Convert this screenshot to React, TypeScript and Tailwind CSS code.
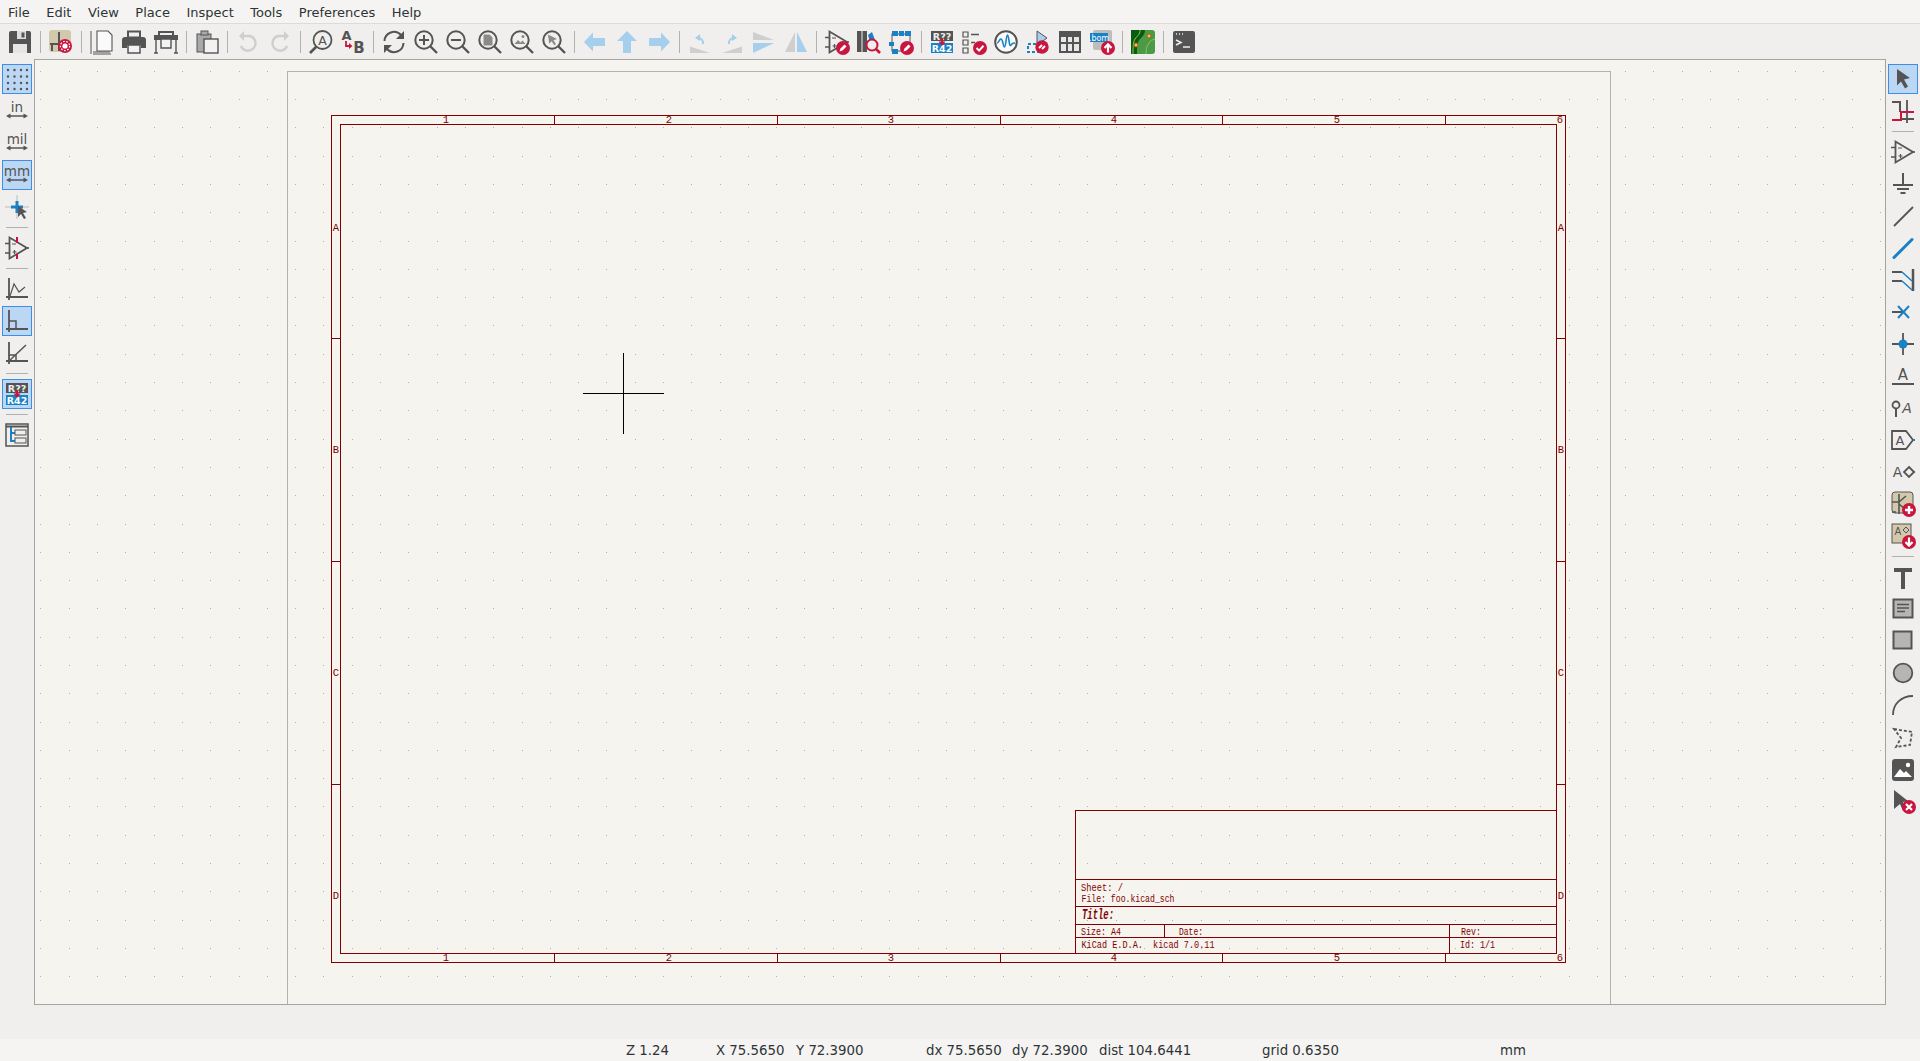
import { ReactNode } from 'react';

const G = '#545454';
const B = '#1a81c4';
const R = '#c8163f';
const LB = '#a5cfec';
const DIS = '#cfcfcf';
const TAN = '#d2c8ab';
const WIRE = '#840000';
const FONT = '"DejaVu Sans", sans-serif';
const MONO = '"Liberation Mono", monospace';

const Glyph = ({ children }: { children: ReactNode }) => (
  <svg viewBox="0 0 24 24" className="w-6 h-6 shrink-0 overflow-visible">{children}</svg>
);

const Label = ({ x, y, size, children, fill = G, weight = 400, anchor = 'middle', style = 'normal' }: { x: number; y: number; size: number; children: ReactNode; fill?: string; weight?: number; anchor?: string; style?: string }) => (
  <text x={x} y={y} fontSize={size} fill={fill} fontWeight={weight} fontStyle={style} textAnchor={anchor} fontFamily={FONT}>{children}</text>
);

const Badge = ({ children }: { children?: ReactNode }) => (
  <g>
    <circle cx="18" cy="18" r="7" fill={R} />
    {children}
  </g>
);

const PencilBadge = () => (
  <Badge><path d="M14.5 21.5l1-3 4-4 2 2-4 4z" fill="#fff" /></Badge>
);
const CheckBadge = () => (
  <Badge><path d="M14.5 18l2.6 2.6 4.4-4.8" fill="none" stroke="#fff" strokeWidth="2" /></Badge>
);
const PlusBadge = () => (
  <Badge><path d="M18 14v8M14 18h8" stroke="#fff" strokeWidth="2.4" /></Badge>
);
const DownBadge = () => (
  <Badge><path d="M18 13.5v8M14.5 18l3.5 3.7 3.5-3.7" fill="none" stroke="#fff" strokeWidth="2.2" /></Badge>
);
const UpBadge = () => (
  <Badge><path d="M18 22.5v-8M14.5 18l3.5-3.7 3.5 3.7" fill="none" stroke="#fff" strokeWidth="2.2" /></Badge>
);

const Mag = ({ children }: { children?: ReactNode }) => (
  <>
    <circle cx="10" cy="10" r="8.7" fill="none" stroke={G} strokeWidth="2" />
    <path d="M16 16l7 7" stroke={G} strokeWidth="2.4" />
    {children}
  </>
);

const OpAmp = ({ color = G }: { color?: string }) => (
  <>
    <path d="M4.5 1.5v21L22 12z" fill="none" stroke={color} strokeWidth="1.8" />
    <path d="M0 7.5h4.5M0 17h4.5M22 12h2" stroke={color} strokeWidth="1.6" />
    <path d="M7 8h4M7.5 16h4M9.5 14v4" stroke={color} strokeWidth="1.2" />
  </>
);

const Annotate = () => (
  <>
    <rect x="1" y="1" width="22" height="10" fill={G} />
    <rect x="1" y="13" width="22" height="10" fill={B} />
    <Label x={12} y={9.5} size={9.5} fill="#eee" weight={700}>R??</Label>
    <Label x={12} y={21.5} size={9.5} fill="#fff" weight={700}>R42</Label>
    <path d="M12 8v5" stroke={R} strokeWidth="2" />
    <path d="M8.5 11.5h7L12 16z" fill={R} />
  </>
);

const Transistor = () => (
  <path d="M8 2v8M1 10h7M8 10v12M8 10l7-6M8 12l7 6M1 20h4" fill="none" stroke={G} strokeWidth="1.6" />
);

const Unit = ({ text }: { text: string }) => (
  <>
    <Label x={12} y={13} size={13.5}>{text}</Label>
    <path d="M3 17h18" stroke={G} strokeWidth="1.5" />
    <path d="M1 17l4.5-2.5v5zM23 17l-4.5-2.5v5z" fill={G} />
  </>
);

const ChartAxes = ({ children }: { children: ReactNode }) => (
  <>
    <path d="M4 1v22M1 20h22" stroke={G} strokeWidth="1.8" fill="none" />
    {children}
  </>
);

const dots4 = [3, 9.5, 16, 22];

const topBar: (ReactNode | 'sep')[] = [
  <><path d="M1 3a2 2 0 012-2h18a2 2 0 012 2v20H1z" fill={G} /><rect x="9" y="1" width="9" height="8" fill="#ddd" /><rect x="13.5" y="2.5" width="3" height="5" fill={G} /><rect x="5" y="14" width="14" height="9" fill="#e6e6e6" /></>,
  'sep',
  <><rect x="0" y="0" width="22" height="22" rx="3" fill={TAN} /><path d="M10 2v7M1 14h8M10 9v12M3 14v7" fill="none" stroke={G} strokeWidth="2" /><circle cx="16" cy="16" r="7" fill={R} /><circle cx="16" cy="16" r="2.6" fill="#fff" /><circle cx="16" cy="16" r="4.6" fill="none" stroke="#fff" strokeWidth="1.2" strokeDasharray="1.6 1.6" /></>,
  'sep',
  <><path d="M3 22h17M3 24h18" fill="none" stroke={G} strokeWidth="1" /><path d="M7 1h11l4 4v16H7z" fill="#fafafa" stroke={G} strokeWidth="1.1" /><path d="M1 1v23" stroke={G} strokeWidth="1" /></>,
  <><path d="M6 1.5h12v6H6z" fill="none" stroke={G} strokeWidth="2" /><path d="M3 7h18a3 3 0 013 3v8h-5v-3H5v3H0v-8a3 3 0 013-3z" fill={G} /><path d="M6 15h12v8H6z" fill="#f2f2f2" stroke={G} strokeWidth="1.5" /></>,
  <><path d="M5 2h14v5H5z" fill="none" stroke={G} strokeWidth="2" /><rect x="0" y="5" width="24" height="5" fill={G} /><path d="M2 10v13M22 10v13M0 23h4M20 23h4" stroke={G} strokeWidth="1.4" /><path d="M7 9h10v9H7z" fill="#f2f2f2" stroke={G} strokeWidth="1.4" /></>,
  'sep',
  <><rect x="2" y="4" width="14" height="18" fill="#a9a9a9" stroke={G} strokeWidth="1" /><rect x="6" y="1" width="7" height="4" fill="#a9a9a9" stroke={G} strokeWidth="1" /><rect x="9" y="9" width="14" height="14" fill="#f2f2f2" stroke={G} strokeWidth="1.4" /></>,
  'sep',
  <><path d="M7 6h7a7.5 7.5 0 11-9 10" fill="none" stroke={DIS} strokeWidth="2.4" /><path d="M8 1v10L3 6z" fill={DIS} /></>,
  <><path d="M17 6h-7a7.5 7.5 0 109 10" fill="none" stroke={DIS} strokeWidth="2.4" /><path d="M16 1v10l5-5z" fill={DIS} /></>,
  'sep',
  <><circle cx="13.5" cy="10" r="9" fill="none" stroke={G} strokeWidth="1.8" /><path d="M7.5 16.5L1 23" stroke={G} strokeWidth="2.6" /><Label x={13.5} y={14.5} size={12.5}>A</Label></>,
  <><Label x={5.5} y={10} size={13} weight={700}>A</Label><Label x={18} y={22.5} size={15} weight={700}>B</Label><path d="M5 11v5h4" fill="none" stroke={R} strokeWidth="1.8" /><path d="M8 13l3.5 3L8 19z" fill={R} /></>,
  'sep',
  <><path d="M2.5 11A9.5 9.5 0 0119 5M21.5 13A9.5 9.5 0 015 19" fill="none" stroke={G} strokeWidth="2" /><path d="M22 1v8h-8zM2 23v-8h8z" fill={G} /></>,
  <Mag><path d="M10 5v10M5 10h10" stroke={G} strokeWidth="2" /></Mag>,
  <Mag><path d="M5 10h10" stroke={G} strokeWidth="2" /></Mag>,
  <Mag><path d="M6 5h5.5L14 7.5V15H6z" fill="#8a8a8a" stroke="#8a8a8a" /></Mag>,
  <Mag><path d="M4.5 14l3.5-4 2.5 2.5 2-2 3 3.5z" fill="#8a8a8a" /><circle cx="13" cy="6.5" r="1.5" fill="#8a8a8a" /></Mag>,
  <Mag><path d="M6 4.5l9 4.5-3.5 1.3 2.5 4-1.8 1-2.5-4-2.5 2.5z" fill="#8a8a8a" /></Mag>,
  'sep',
  <path d="M1 12l9-9.500V8h12v8H10v5.500z" fill={LB} />,
  <path d="M12 1l10 10h-6v12H8V11H2z" fill={LB} />,
  <path d="M23 12l-9-9.500V8H2v8h12v5.500z" fill={LB} />,
  'sep',
  <><path d="M2 23V16.5L22 23z" fill={DIS} /><path d="M15 14a5 5 0 00-5-6" fill="none" stroke={LB} strokeWidth="2" /><path d="M7 8l5-4v7z" fill={LB} /></>,
  <><path d="M22 23v-6.5L2 23z" fill={DIS} /><path d="M9 14a5 5 0 015-6" fill="none" stroke={LB} strokeWidth="2" /><path d="M17 8l-5-4v7z" fill={LB} /></>,
  <><path d="M1 2l21 8H1z" fill={DIS} /><path d="M1 13h21L1 23z" fill={LB} /></>,
  <><path d="M11 2v20H1z" fill={DIS} /><path d="M13 2l10 20H13z" fill={LB} /></>,
  'sep',
  <><OpAmp /><PencilBadge /></>,
  <><rect x="0" y="1" width="4.5" height="21" fill={G} /><rect x="5.5" y="1" width="4.5" height="21" fill={G} /><path d="M11 5l4-3 3 8-5 2z" fill={B} /><circle cx="15" cy="15" r="5.5" fill="#eee" stroke={R} strokeWidth="2" /><path d="M19 19l4 4" stroke={R} strokeWidth="2.6" /></>,
  <><rect x="3" y="4" width="18" height="17" fill="none" stroke={G} strokeWidth="1" /><path d="M3 6h6v-5H3zM10 6h5v-5h-5zM16 6h6v-5h-6zM0 12h5v4H0zM3 24h6v-5H3z" fill={B} /><PencilBadge /></>,
  'sep',
  <Annotate />,
  <><path d="M1 2h5v5H1zM1 10h5v5H1zM1 18h5v5H1z" fill="none" stroke={G} strokeWidth="1.2" /><path d="M9 4.5h8M9 12.5h4" stroke={G} strokeWidth="1.4" /><CheckBadge /></>,
  <><circle cx="12" cy="12" r="10.8" fill="#fafafa" stroke={G} strokeWidth="2" /><path d="M3 13c2 0 2-4 4-4s2 8 3.5 8S12 5 13.5 5 15 18 17 15c1-2 2-2 4-2" fill="none" stroke={B} strokeWidth="1.6" /></>,
  <><path d="M11 1v14l10-7z" fill={LB} stroke={G} strokeWidth="1" /><path d="M2 14h12v8H2z" fill="none" stroke={B} strokeWidth="2" strokeDasharray="3 2" /><circle cx="16" cy="17" r="6.7" fill={R} /><path d="M13 18l3-3M19 16l-3 3" stroke="#fff" strokeWidth="1.8" /></>,
  <><rect x="1" y="1" width="22" height="22" fill={G} /><path d="M3 7h5v5H3zM10 7h4v5h-4zM16 7h5v5h-5zM3 14h5v7H3zM10 14h4v7h-4zM16 14h5v7h-5z" fill="#e6e6e6" /></>,
  <><rect x="3" y="0" width="19" height="20" rx="2" fill="#bdbdbd" /><rect x="0" y="3" width="18" height="9" fill={B} /><Label x={9} y={10.5} size={8} fill="#fff">.bom</Label><UpBadge /></>,
  'sep',
  <><rect x="0" y="0" width="24" height="24" rx="3" fill="#4c9a45" /><path d="M0 0h14c0 4-2 6-5 9s-3 9-3 15H0z" fill="#0a5d0e" /><path d="M9 0c0 5-3 6-5 9s-2 9-2 15M15 24c0-6 1-8 3-11s3-3 6-4" fill="none" stroke="#8cc45e" strokeWidth="1" /><circle cx="18" cy="6" r="2" fill="#f5c24a" stroke="#a85f1a" /><circle cx="5" cy="15" r="2" fill="#f5c24a" stroke="#a85f1a" /></>,
  'sep',
  <><rect x="1" y="1" width="22" height="22" rx="2" fill={G} /><path d="M4 4h1M7 4h1M10 4h1" stroke="#eee" strokeWidth="1.5" /><path d="M4 10l5 2.5L4 15" fill="none" stroke="#eee" strokeWidth="1.5" /><path d="M11 17h7" stroke="#eee" strokeWidth="1.5" /></>,
];

type BarItem = ReactNode | 'sep' | { icon: ReactNode; on: true };

const leftBar: BarItem[] = [
  { on: true, icon: <path d={dots4.map((y) => dots4.map((x) => `M${x - 1.2} ${y}a1.2 1.2 0 102.4 0a1.2 1.2 0 10-2.4 0z`).join('')).join('')} fill={G} /> },
  <Unit text="in" />,
  <Unit text="mil" />,
  { on: true, icon: <Unit text="mm" /> },
  <><path d="M12 0v24M0 12h24" stroke="#bbb" strokeWidth="1" /><path d="M12 6v12M6 12h12" stroke={B} strokeWidth="3" /><path d="M13 11l9 6-4 1 3 5-2 1-3-5-3 3z" fill={G} /></>,
  'sep',
  <><OpAmp /><path d="M12 1v6M12 18v5" stroke={R} strokeWidth="2" /></>,
  'sep',
  <ChartAxes><path d="M5 19L9 7l5 8 6-5" fill="none" stroke={G} strokeWidth="1.2" /></ChartAxes>,
  { on: true, icon: <ChartAxes><path d="M4 12h7v8" fill="none" stroke={G} strokeWidth="1.5" /></ChartAxes> },
  <ChartAxes><path d="M4 20L21 4M4 14h7v6" fill="none" stroke={G} strokeWidth="1.5" /></ChartAxes>,
  'sep',
  { on: true, icon: <Annotate /> },
  'sep',
  <><rect x="1" y="1" width="22" height="22" fill="none" stroke={G} strokeWidth="1.5" /><path d="M1 3.5h22" stroke={G} strokeWidth="2" /><path d="M6 4v15M6 10h4M6 18h4" stroke={B} strokeWidth="2" fill="none" /><rect x="10" y="7" width="11" height="5" fill="none" stroke={G} strokeWidth="1" /><rect x="10" y="15" width="11" height="5" fill="none" stroke={G} strokeWidth="1" /></>,
];

const rightBar: BarItem[] = [
  { on: true, icon: <path d="M6 2l13 9-6 1.5 4 7-3 2-4-7-4 4z" fill={G} /> },
  <><path d="M16 1v23M11 13h12M11 20h12" stroke={G} strokeWidth="1.8" fill="none" /><path d="M1 3h8v10" fill="none" stroke={G} strokeWidth="2" /><path d="M1 21h9v-8h13" fill="none" stroke={R} strokeWidth="2" /></>,
  'sep',
  <OpAmp />,
  <path d="M12 1v12M2 13h20M6 17h12M9.5 21h5" stroke={G} strokeWidth="2" fill="none" />,
  <path d="M3 22L22 3" stroke={G} strokeWidth="1.8" />,
  <path d="M3 21.5L21 3.5" stroke={B} strokeWidth="3" strokeLinecap="round" />,
  <><path d="M22 1v22" stroke={G} strokeWidth="2.5" /><path d="M1 4h10M1 13h10" stroke={G} strokeWidth="2" /><path d="M11 4l10 9M11 13l10 9" stroke={B} strokeWidth="1.5" /></>,
  <><path d="M1 12h10" stroke={G} strokeWidth="2" /><path d="M7 6l11 12M18 6L7 18" stroke={B} strokeWidth="2" /></>,
  <><path d="M1 12h22M12 1v22" stroke={G} strokeWidth="1.8" /><circle cx="12" cy="12" r="4.5" fill={B} /></>,
  <><Label x={12} y={16} size={15}>A</Label><path d="M1 20h22" stroke={G} strokeWidth="2" /></>,
  <><circle cx="5" cy="9" r="3.5" fill="none" stroke={G} strokeWidth="1.8" /><path d="M5 13v8" stroke={G} strokeWidth="2" /><Label x={16} y={17} size={14} style="italic">A</Label></>,
  <><path d="M1 3h14l7 9-7 9H1z" fill="none" stroke={G} strokeWidth="1.8" /><path d="M22 12h2" stroke={B} strokeWidth="2" /><Label x={9} y={17} size={13}>A</Label></>,
  <><Label x={6.5} y={17} size={14}>A</Label><path d="M18 7l5 5-5 5-5-5z" fill="none" stroke={G} strokeWidth="1.8" /><path d="M22 12h2" stroke={G} strokeWidth="1.5" /></>,
  <><rect x="1" y="0" width="21" height="21" rx="3" fill={TAN} stroke={G} strokeWidth="1" /><Transistor /><PlusBadge /></>,
  <><rect x="1" y="0" width="19" height="19" fill={TAN} stroke={G} strokeWidth="1" /><Label x={7} y={11} size={10}>A</Label><path d="M15 3l3 3-3 3-3-3z" fill="none" stroke={G} strokeWidth="1" /><DownBadge /></>,
  'sep',
  <path d="M3 3h18v4h-7v17h-4V7H3z" fill={G} />,
  <><rect x="2.5" y="2.5" width="19" height="18" fill="#b5b5b5" stroke={G} strokeWidth="2" /><path d="M6 7.5h12M6 11h12M6 14.5h8" stroke={G} strokeWidth="1.3" /></>,
  <rect x="2.5" y="2.5" width="18" height="17" fill="#b5b5b5" stroke={G} strokeWidth="2" />,
  <circle cx="12" cy="12" r="9.3" fill="#b5b5b5" stroke={G} strokeWidth="1.8" />,
  <path d="M2 22C2 11 10 3 22 3" fill="none" stroke={G} strokeWidth="1.8" />,
  <path d="M3 4l18 3-2 13-14 2 5-9z" fill="none" stroke={G} strokeWidth="1.8" strokeDasharray="3 2" />,
  <><rect x="1" y="2" width="22" height="22" rx="3" fill={G} /><circle cx="17" cy="8" r="2.2" fill="#fff" /><path d="M3 20l6-8 4 4 2-2 6 6z" fill="#fff" /></>,
  <><path d="M3 1l14 11-5 1 3 7-3 2-3-7-6 5z" fill={G} /><Badge><path d="M15 15l6 6M21 15l-6 6" stroke="#fff" strokeWidth="2.2" /></Badge></>,
];

function TopButton({ icon }: { icon: ReactNode }) {
  return <div className="w-8 h-8 flex items-center justify-center shrink-0"><Glyph>{icon}</Glyph></div>;
}

function SideBar({ items }: { items: BarItem[] }) {
  return (
    <div className="w-[34px] shrink-0 flex flex-col items-center pt-[4px]">
      {items.map((item, i) => {
        if (item === 'sep') {
          return <div key={i} className="h-[9px] w-full flex items-center justify-center shrink-0"><div className="w-[22px] h-px bg-[#b2b1af]" /></div>;
        }
        const on = typeof item === 'object' && item !== null && 'on' in (item as object);
        const icon = on ? (item as { icon: ReactNode }).icon : (item as ReactNode);
        return (
          <div key={i} className="h-8 w-[30px] flex items-center justify-center shrink-0">
            <div className={`w-[30px] h-[30px] flex items-center justify-center ${on ? 'bg-[#bcd7f3] border border-[#3d8ee6]' : ''}`}>
              <Glyph>{icon}</Glyph>
            </div>
          </div>
        );
      })}
    </div>
  );
}

const dotPath = (() => {
  let d = '';
  for (let x = 34 + 6.4; x < 1886; x += 28.3) {
    for (let y = 70.7; y < 1004; y += 28.3) {
      d += `M${Math.round(x)} ${Math.round(y) + 0.5}h1`;
    }
  }
  return d;
})();

const tickX = [554.5, 777.5, 1000.5, 1222.5, 1445.5];
const tickY = [338.5, 561.5, 784.5];
const numX = [446, 669, 891, 1114, 1337, 1560];
const letters: [string, number][] = [['A', 227], ['B', 449], ['C', 672], ['D', 895]];

const StrokeText = ({ x, y, w, size = 10.5, children, bold = false }: { x: number; y: number; w: number; size?: number; children: string; bold?: boolean }) => (
  <text x={x} y={y} fontSize={size} fill={WIRE} fontFamily={MONO} fontWeight={bold ? 700 : 400} fontStyle={bold ? 'italic' : 'normal'} textLength={w} lengthAdjust="spacingAndGlyphs" xmlSpace="preserve">{children}</text>
);

const FrameMark = ({ x, y, children }: { x: number; y: number; children: ReactNode }) => (
  <text x={x} y={y} fontSize="10.5" textAnchor="middle" fill={WIRE} fontFamily={MONO}>{children}</text>
);

function Sheet() {
  return (
    <svg viewBox="35 60 1850 944" className="block w-full h-full" shapeRendering="crispEdges">
      <path d={dotPath} stroke="#b0b0ac" strokeWidth="1" fill="none" />
      <path d="M287.5 1004V71.5H1610.5V1004" stroke="#b3b2ae" strokeWidth="1" fill="none" />
      <g stroke={WIRE} strokeWidth="1" fill="none">
        <rect x="331.5" y="115.5" width="1234" height="847" />
        <rect x="340.5" y="124.5" width="1216" height="829" />
        {tickX.map((x) => <path key={x} d={`M${x} 115.5V124.5M${x} 953.5V962.5`} />)}
        {tickY.map((y) => <path key={y} d={`M331.5 ${y}H340.5M1556.5 ${y}H1565.5`} />)}
        <path d="M1075.5 953.5V810.5H1556.5M1075.5 879.5H1556.5M1075.5 906.5H1556.5M1075.5 924.5H1556.5M1075.5 937.5H1556.5M1164.5 924.5V937.5M1449.5 924.5V953.5" />
      </g>
      {numX.map((x, i) => (
        <g key={x}>
          <FrameMark x={x} y={123}>{i + 1}</FrameMark>
          <FrameMark x={x} y={961}>{i + 1}</FrameMark>
        </g>
      ))}
      {letters.map(([c, y]) => (
        <g key={c}>
          <FrameMark x={336} y={y + 3.5}>{c}</FrameMark>
          <FrameMark x={1561} y={y + 3.5}>{c}</FrameMark>
        </g>
      ))}
      <StrokeText x={1081} y={891} w={42}>Sheet: /</StrokeText>
      <StrokeText x={1081.5} y={902} w={93}>File: foo.kicad_sch</StrokeText>
      <StrokeText x={1082} y={919} w={32} size={15} bold>Title:</StrokeText>
      <StrokeText x={1081} y={935} w={40}>Size: A4</StrokeText>
      <StrokeText x={1179} y={935} w={24}>Date:</StrokeText>
      <StrokeText x={1461} y={935} w={20}>Rev:</StrokeText>
      <StrokeText x={1081.5} y={948} w={133}>KiCad E.D.A.  kicad 7.0.11</StrokeText>
      <StrokeText x={1460} y={948} w={35}>Id: 1/1</StrokeText>
      <path d="M583 393.5H664M623.5 353V434" stroke="#000" strokeWidth="1" fill="none" />
    </svg>
  );
}

const menus = ['File', 'Edit', 'View', 'Place', 'Inspect', 'Tools', 'Preferences', 'Help'];

export default function App() {
  return (
    <div className="h-screen w-screen overflow-hidden flex flex-col bg-[#f0efed] text-[#2e3436] text-[13.33px] font-['DejaVu_Sans',sans-serif]">
      <div className="h-6 shrink-0 flex items-center gap-[16.5px] pt-[2px] text-[13px] bg-[#f5f4f2] border-b border-[#dcdbd9]">
        {menus.map((m, i) => (
          <span key={m} className={i === 0 ? 'pl-2' : ''}>{m}</span>
        ))}
      </div>
      <div className="h-[35px] shrink-0 flex items-center pl-1 pt-px">
        {topBar.map((item, i) =>
          item === 'sep' ? (
            <div key={i} className="w-[9px] h-[22px] flex justify-center shrink-0"><div className="w-px h-full bg-[#b2b1af]" /></div>
          ) : (
            <TopButton key={i} icon={item} />
          )
        )}
      </div>
      <div className="flex-1 min-h-0 flex">
        <SideBar items={leftBar} />
        <div className="flex-1 min-w-0 bg-[#f5f4ef] border border-[#a5a4a1]">
          <Sheet />
        </div>
        <SideBar items={rightBar} />
      </div>
      <div className="h-[34px] shrink-0" />
      <div className="h-[22px] shrink-0 flex items-center bg-[#f5f4f2] pl-[626px] pt-[2px] whitespace-pre">
        <span className="w-[90px]">Z 1.24</span>
        <span className="w-[80px]">X 75.5650</span>
        <span className="w-[130px]">Y 72.3900</span>
        <span className="w-[86px]">dx 75.5650</span>
        <span className="w-[87px]">dy 72.3900</span>
        <span className="w-[163px]">dist 104.6441</span>
        <span className="w-[238px]">grid 0.6350</span>
        <span>mm</span>
      </div>
    </div>
  );
}
